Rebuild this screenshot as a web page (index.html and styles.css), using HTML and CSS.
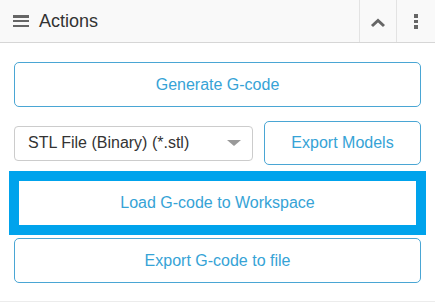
FILE: index.html
```html
<!DOCTYPE html>
<html lang="en">
<head>
  <meta charset="UTF-8">
  <title>Actions</title>
  <link rel="stylesheet" href="styles.css">
</head>
<body>
  <div class="panel">
    <div class="panel-head">
      <div class="title">
        <span class="burger"><i></i><i></i><i></i></span>
        Actions
      </div>
      <div class="tool">
        <svg width="16" height="10" viewBox="0 0 16 10"><path d="M2 8 L8 2.5 L14 8" fill="none" stroke="#666" stroke-width="3"/></svg>
      </div>
      <div class="tool tool-more">
        <span class="dots"><i></i><i></i><i></i></span>
      </div>
    </div>

    <div class="panel-body">
      <button class="btn">Generate G-code</button>

      <div class="export-row">
        <div class="select">
          <span>STL File (Binary) (*.stl)</span>
          <span class="caret"></span>
        </div>
        <button class="btn btn-side">Export Models</button>
      </div>

      <button class="btn btn-focus">Load G-code to Workspace</button>
      <button class="btn btn-last">Export G-code to file</button>
    </div>
  </div>
</body>
</html>
```

FILE: styles.css
```css
body {
  margin: 0;
  font-family: "Liberation Sans", Arial, sans-serif;
  background: #fff;
}
.panel {
  width: 435px;
  height: 301px;
  border-bottom: 1px solid #ececec;
}
.panel-head {
  display: flex;
  height: 42px;
  background: #f9f9f9;
  border-bottom: 1px solid #d6d6d6;
}
.title {
  flex: 1;
  display: flex;
  align-items: center;
  padding-left: 13px;
  font-size: 18px;
  color: #333;
}
.burger {
  display: flex;
  flex-direction: column;
  justify-content: space-between;
  width: 16px;
  height: 12px;
  margin-right: 10px;
}
.burger i {
  display: block;
  height: 2.5px;
  background: #666;
}
.tool {
  width: 36px;
  display: flex;
  align-items: center;
  justify-content: center;
  border-left: 1px solid #e3e3e3;
}
.tool svg {
  margin-top: 3px;
}
.tool-more {
  width: 38px;
}
.dots {
  display: flex;
  flex-direction: column;
  gap: 2px;
  margin-top: 1px;
}
.dots i {
  display: block;
  width: 4px;
  height: 3.5px;
  background: #666;
}
.panel-body {
  padding: 19px 14px 0;
  display: flex;
  flex-direction: column;
}
.btn {
  display: block;
  width: 100%;
  height: 45px;
  background: #fff;
  border: 1px solid #4aa6d4;
  border-radius: 5px;
  color: #36a3d6;
  font-family: "Liberation Sans", Arial, sans-serif;
  font-size: 16px;
  padding: 0;
}
.export-row {
  display: flex;
  align-items: center;
  margin-top: 14px;
  gap: 11px;
}
.select {
  flex: 0 0 239px;
  height: 35px;
  box-sizing: border-box;
  border: 1px solid #ccc;
  border-radius: 4px;
  display: flex;
  align-items: center;
  justify-content: space-between;
  padding: 0 11px 0 13px;
  font-size: 16px;
  color: #333;
}
.caret {
  width: 0;
  height: 0;
  border-left: 7px solid transparent;
  border-right: 7px solid transparent;
  border-top: 6px solid #999;
}
.btn-side {
  flex: 1;
  height: 44px;
}
.btn-focus {
  margin-top: 11px;
  height: 54px;
  border: 5px solid #00a3ec;
  border-radius: 0;
  outline: 5px solid #00a3ec;
}
.btn-last {
  margin-top: 8px;
}
```
